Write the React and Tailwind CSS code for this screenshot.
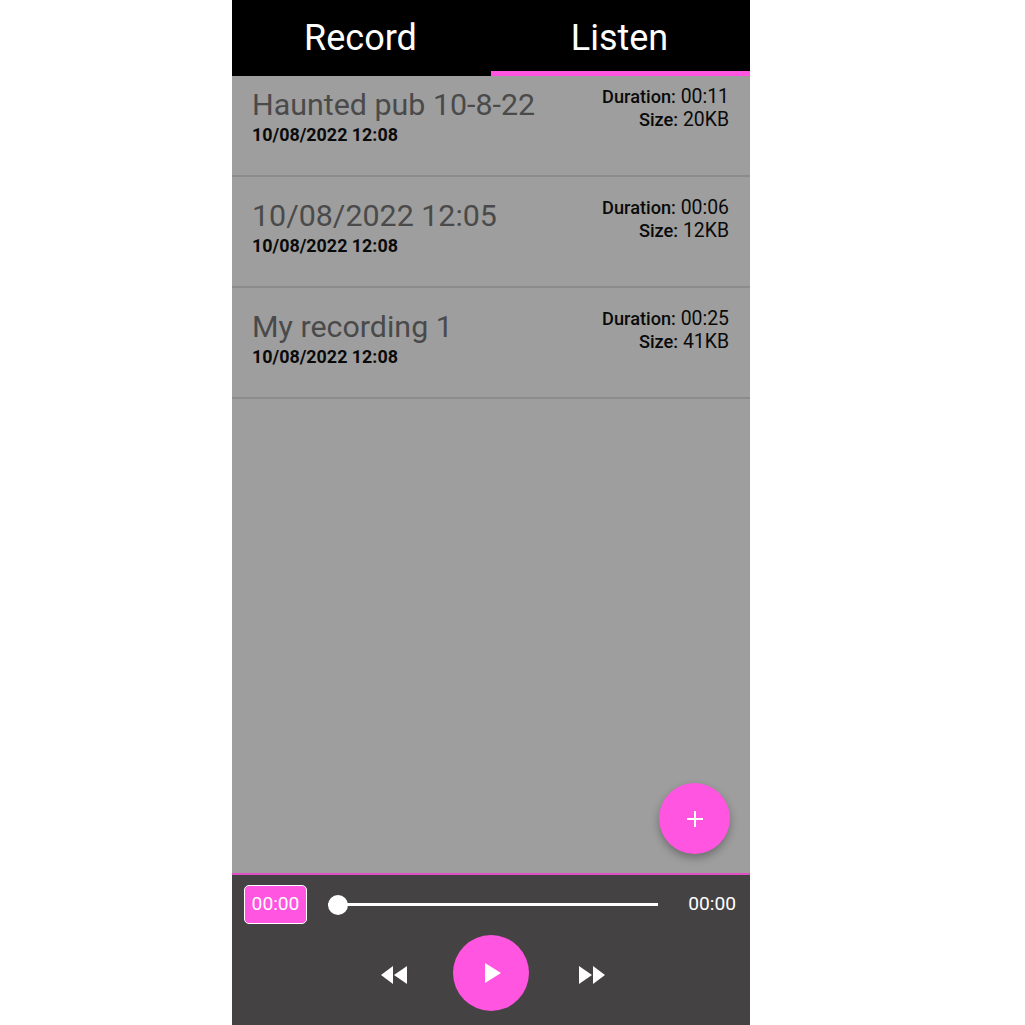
import React from 'react';

const recordings = [
    { title: 'Haunted pub 10-8-22', date: '10/08/2022 12:08', duration: '00:11', size: '20KB' },
    { title: '10/08/2022 12:05', date: '10/08/2022 12:08', duration: '00:06', size: '12KB' },
    { title: 'My recording 1', date: '10/08/2022 12:08', duration: '00:25', size: '41KB' },
];

function Rewind() {
    return (
        <svg width="28" height="20" viewBox="0 0 28 20" className="fill-white mt-1">
            <polygon points="13,1 13,19 1,10" />
            <polygon points="27,1 27,19 14,10" />
        </svg>
    );
}

function Forward() {
    return (
        <svg width="28" height="20" viewBox="0 0 28 20" className="fill-white mt-1 ml-[49px]">
            <polygon points="1,1 1,19 14,10" />
            <polygon points="15,1 15,19 27,10" />
        </svg>
    );
}

export default function App() {
    return (
        <div className="bg-white h-[1025px] overflow-hidden font-['Roboto',sans-serif]">
            <div className="ml-[232px] w-[518px] h-full flex flex-col bg-[#9e9e9e]">
                {/* Tabs */}
                <div className="h-[76px] flex bg-black text-white text-[36px] shrink-0">
                    <div className="flex-1 flex items-center justify-center pt-[4px] pr-[2px] border-b-[5px] border-transparent">Record</div>
                    <div className="flex-1 flex items-center justify-center pt-[4px] pr-[2px] border-b-[5px] border-[#ff55e0]">Listen</div>
                </div>

                {/* Recordings */}
                <div className="flex-1 relative">
                    {recordings.map((rec) => (
                        <div
                            key={rec.title}
                            className="h-[111px] first:h-[101px] pt-[18px] first:pt-2 pl-5 pr-[21px] flex justify-between border-b-2 border-[#8c8c8c]"
                        >
                            <div>
                                <div className="text-[30.4px] leading-[42px] text-[#4a4a4a]">{rec.title}</div>
                                <div className="text-[17.9px] leading-[18px] font-bold text-[#0a0a0a]">{rec.date}</div>
                            </div>
                            <div className="text-right text-[19.4px] leading-[23px] text-[#0a0a0a] pt-[1px]">
                                <div><span className="font-medium text-[18.2px]">Duration:</span> {rec.duration}</div>
                                <div><span className="font-medium text-[18.2px]">Size:</span> {rec.size}</div>
                            </div>
                        </div>
                    ))}

                    <button className="absolute right-[20px] bottom-[19px] w-[71px] h-[71px] rounded-full bg-[#ff55e0] flex items-center justify-center shadow-[0_4px_8px_rgba(0,0,0,0.3)]">
                        <svg width="20" height="20" viewBox="0 0 20 20" className="stroke-white" strokeWidth="2">
                            <path d="M10 2v16M2 10h16" />
                        </svg>
                    </button>
                </div>

                {/* Player */}
                <div className="h-[152px] shrink-0 bg-[#454243] border-t-2 border-[#e04fc6] text-white">
                    <div className="flex items-center pl-3 pr-[14px] pt-[10px]">
                        <div className="w-[63px] h-[39px] flex items-center justify-center rounded-[5px] bg-[#ff55e0] border border-white text-[19.2px]">00:00</div>
                        <div className="relative flex-1 h-[3px] bg-white ml-[21px] mr-[30px]">
                            <div className="absolute left-0 top-1/2 -translate-y-1/2 w-[20px] h-[20px] rounded-full bg-white"></div>
                        </div>
                        <div className="text-[19.2px]">00:00</div>
                    </div>
                    <div className="flex items-center pl-[148px] mt-[11px]">
                        <Rewind />
                        <button className="w-[76px] h-[76px] ml-[45px] rounded-full bg-[#ff55e0] flex items-center justify-center">
                            <svg width="18" height="20" viewBox="0 0 18 20" className="fill-white ml-[4px]">
                                <polygon points="1,0 1,20 17,10" />
                            </svg>
                        </button>
                        <Forward />
                    </div>
                </div>
            </div>
        </div>
    );
}
